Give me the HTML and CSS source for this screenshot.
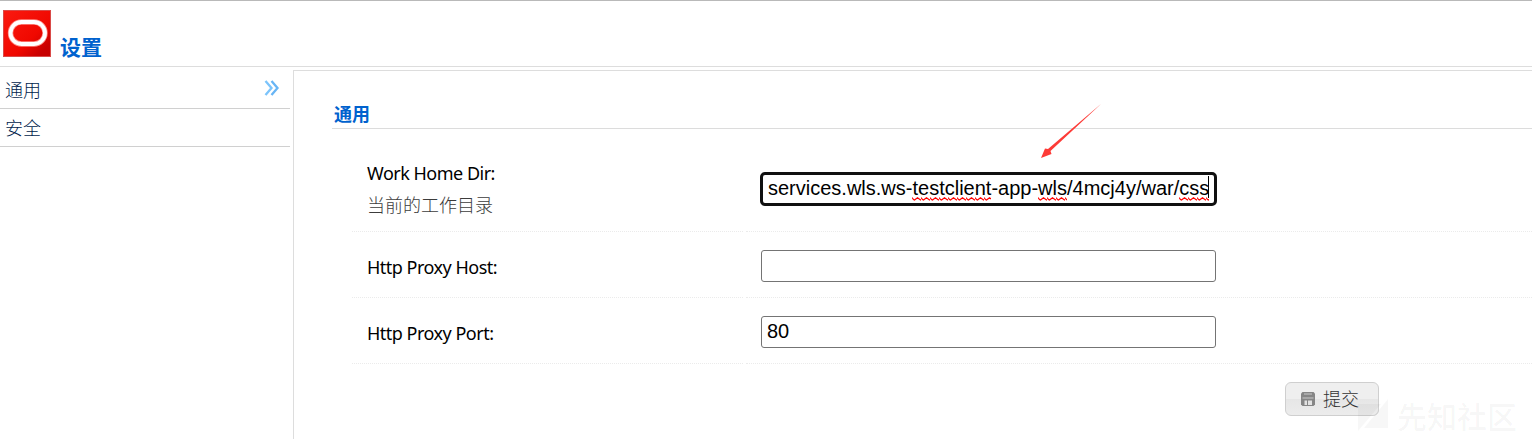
FILE: index.html
```html
<!DOCTYPE html>
<html lang="zh-CN">
<head>
<meta charset="utf-8">
<title>设置</title>
<link rel="stylesheet" href="styles.css">
</head>
<body>
<header class="header">
  <svg class="logo" width="48" height="47" viewBox="0 0 48 47">
    <defs><linearGradient id="red" x1="0" y1="0" x2="1" y2="1"><stop offset="0" stop-color="#fb1a10"/><stop offset=".6" stop-color="#f00800"/><stop offset=".85" stop-color="#c90000"/><stop offset="1" stop-color="#c40000"/></linearGradient></defs>
    <rect x=".5" y=".5" width="47" height="46" fill="url(#red)" stroke="#d94a48"/>
    <rect x="7.500" y="12" width="34.500" height="22" rx="11" fill="none" stroke="#ff8a84" stroke-width="5.400"/>
    <rect x="7.500" y="12" width="34.500" height="22" rx="11" fill="none" stroke="#fff" stroke-width="3.800"/>
  </svg>
  <h1 class="title">设置</h1>
</header>
<div class="layout">
  <nav class="sidebar">
    <a class="nav-item"><span>通用</span>
      <svg class="chevrons" width="16" height="18" viewBox="0 0 16 18" fill="none" stroke-width="2.300"><path d="M1.500 2 7.500 9l-6 7" stroke="#7cc4fb"/><path d="m7.500 2 6 7-6 7" stroke="#68b5f5"/></svg>
    </a>
    <a class="nav-item"><span>安全</span></a>
  </nav>
  <main class="content">
    <h2 class="section-title">通用</h2>
    <form class="settings">
      <div class="row row-first">
        <div class="label-cell"><span class="label work">Work Home Dir:</span><span class="hint">当前的工作目录</span></div>
        <div class="value-cell"><div class="field focused"><span class="path">services.wls.ws-<span class="typo">testclient</span>-app-<span class="typo">wls</span>/4mcj4y/war/<span class="typo">css</span></span><i class="caret"></i></div></div>
      </div>
      <div class="row">
        <div class="label-cell"><span class="label">Http Proxy Host:</span></div>
        <div class="value-cell"><div class="field"></div></div>
      </div>
      <div class="row">
        <div class="label-cell"><span class="label">Http Proxy Port:</span></div>
        <div class="value-cell"><div class="field">80</div></div>
      </div>
    </form>
    <div class="actions">
      <button class="submit" type="button">
        <svg width="14" height="14" viewBox="0 0 14 14"><path fill="#868686" d="M1.500 0h11L14 1.500v11L12.500 14h-11L0 12.500v-11z"/><path fill="#c9c9c9" d="M3 1.500h8v1H3zM1.500 5.500h11v1h-11z"/><path fill="#e2e2e2" d="M3.500 8.500H6V13H3.500zM7 8.500h4V13H7z"/></svg>
        <span>提交</span>
      </button>
    </div>
  </main>
</div>
<svg class="arrow" width="62" height="57" viewBox="0 0 62 57"><path fill="#fd3b37" d="M61.500.5 10.500 48l1 3L1 55 5 45.500l3 .5z"/></svg>
<div class="watermark">
  <svg width="31" height="34" viewBox="0 0 31 34"><path d="M0 5h23L0 32zM30 0v29H6z"/></svg>
  <span>先知社区</span>
</div>
</body>
</html>
```
FILE: styles.css
```css
* { box-sizing: border-box; }
body {
  margin: 0;
  height: 439px;
  overflow: hidden;
  position: relative;
  background: #fff;
  font-family: "Noto Sans", "Noto Sans CJK SC", sans-serif;
  font-size: 17px;
}
.header {
  display: flex;
  align-items: flex-start;
  height: 67px;
  padding: 9px 0 0 3px;
  border-top: 1px solid #b9b9b9;
  border-bottom: 1px solid #ddd;
}
.logo { display: block; flex: none; }
.title {
  margin: 21px 0 0 9px;
  color: #0062ce;
  font: bold 21px/30px "Noto Sans CJK SC", sans-serif;
}
.layout { display: flex; height: 372px; }
.sidebar { width: 290px; padding-top: 4px; }
.nav-item {
  display: flex;
  align-items: center;
  justify-content: space-between;
  height: 38px;
  padding: 0 10px 2px 5px;
  border-bottom: 1px solid #d0d0d0;
  color: #001c4c;
  font: 300 18px/34px "Noto Sans CJK SC", sans-serif;
}
.chevrons { margin-bottom: 1px; }
.content {
  flex: 1;
  min-width: 0;
  margin: 3px 0 0 3px;
  border-top: 1px solid #ddd;
  border-left: 1px solid #ddd;
}
.section-title {
  height: 38px;
  margin: 20px 0 0 38px;
  padding-left: 2px;
  border-bottom: 1px solid #dcdcdc;
  color: #0062ce;
  font: bold 18px/44px "Noto Sans CJK SC", sans-serif;
}
.settings { margin: 20px 0 0 58px; }
.row {
  display: grid;
  grid-template-columns: 391px 1fr;
  column-gap: 3px;
  height: 66px;
}
.row-first { height: 83px; }
.label-cell, .value-cell {
  display: flex;
  border-bottom: 1px dotted #ebebeb;
}
.label-cell {
  flex-direction: column;
  justify-content: center;
  padding-left: 15px;
}
.value-cell { align-items: center; padding-left: 15px; }
.row-first .label-cell { justify-content: flex-start; padding-top: 9px; }
.row-first .value-cell { padding-left: 14px; }
.label {
  align-self: flex-start;
  padding-top: 4px;
  line-height: 30px;
  font-size: 18px;
  letter-spacing: -.5px;
  color: #000;
  white-space: nowrap;
}
.label.work { padding: 0; }
.hint {
  color: #3c3c3c;
  font: 300 18px/32px "Noto Sans CJK SC", sans-serif;
}
.field {
  display: flex;
  width: 455px;
  height: 32px;
  margin-top: 3px;
  padding-left: 5px;
  border: 1px solid #747474;
  border-radius: 3px;
  color: #000;
  font: 20px/28px "Liberation Sans", Arial, sans-serif;
}
.field.focused {
  width: 457px;
  height: 34px;
  margin-top: -2px;
  border: 3px solid #101010;
  border-radius: 5px;
  line-height: 26px;
}
.path { white-space: nowrap; }
.typo {
  padding-bottom: 2px;
  background: url("data:image/svg+xml,%3Csvg xmlns='http://www.w3.org/2000/svg' width='9' height='4'%3E%3Cpath d='M0 .5 1.500 2.500 2.500 3 5.500.8 8.500 3 9 2.500' fill='none' stroke='red' stroke-width='1.200'/%3E%3C/svg%3E") 0 100% repeat-x;
}
.caret { width: 1px; height: 22px; margin: 1px 0 0 -1px; background: #000; }
.actions { padding: 18px 0 0 991px; }
.submit {
  display: flex;
  align-items: center;
  gap: 8px;
  width: 94px;
  height: 34px;
  padding: 0 0 0 15px;
  border: 1px solid #cfcfcf;
  border-radius: 6px;
  background: linear-gradient(#efefef 0 50%, #e6e6e6 50%, #ececec);
  color: #333;
  font: 300 18px/30px "Noto Sans CJK SC", sans-serif;
}
.submit span { margin-top: -3px; }
.arrow { position: absolute; left: 1040px; top: 103px; }
.watermark {
  position: absolute;
  left: 1358px;
  top: 399px;
  display: flex;
  align-items: center;
  gap: 8px;
  color: rgba(0, 0, 0, .045);
  font: 500 30px/34px "Noto Sans CJK SC", sans-serif;
}
.watermark span { margin-top: -3px; }
.watermark svg { fill: rgba(0, 0, 0, .03); }
```
